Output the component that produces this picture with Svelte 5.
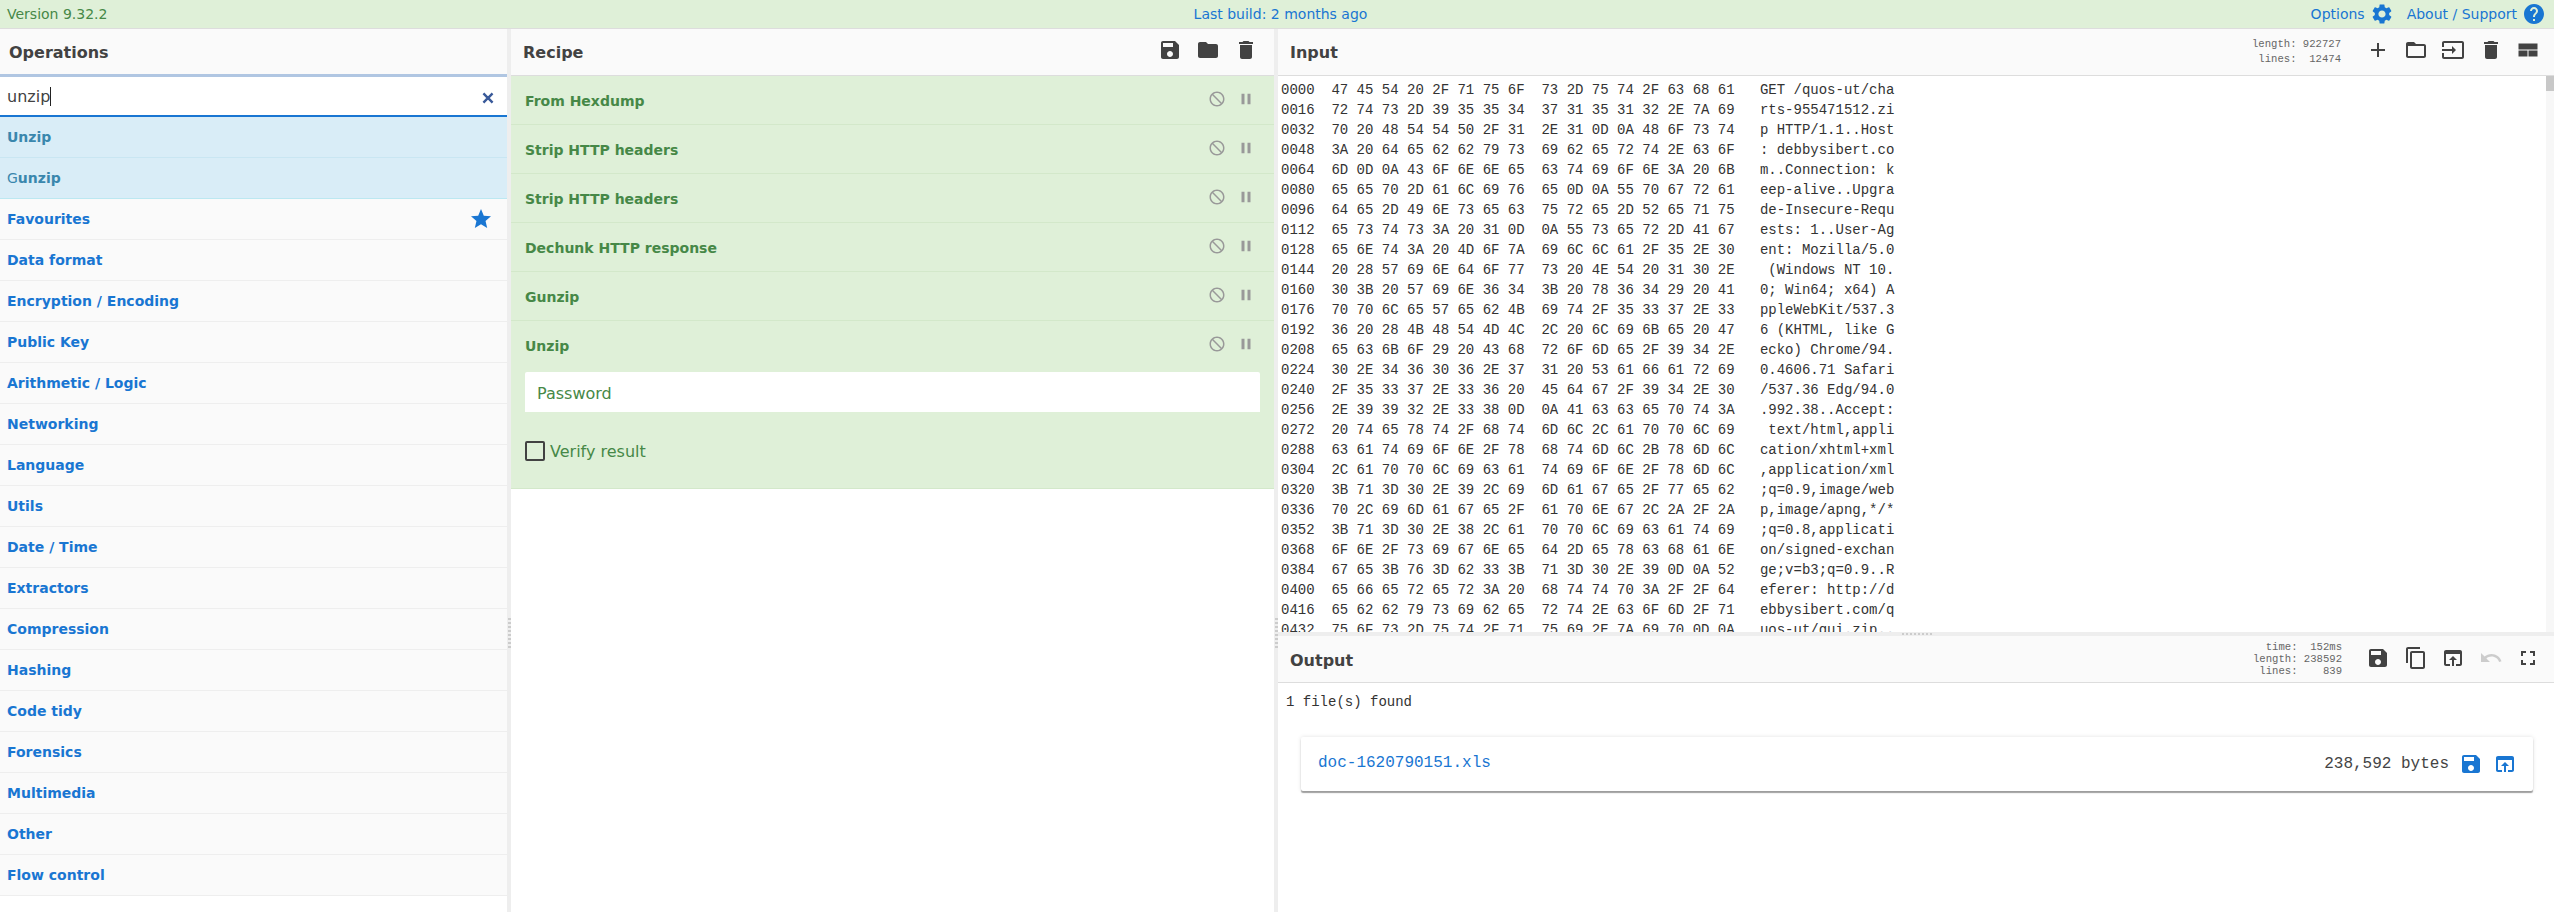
<script>
  const icons = {
    save: 'M17 3H5c-1.11 0-2 .9-2 2v14c0 1.1.89 2 2 2h14c1.1 0 2-.9 2-2V7l-4-4zm-5 16c-1.66 0-3-1.34-3-3s1.34-3 3-3 3 1.34 3 3-1.34 3-3 3zm3-10H5V5h10v4z',
    folder: 'M10 4H4c-1.1 0-1.99.9-1.99 2L2 18c0 1.1.9 2 2 2h16c1.1 0 2-.9 2-2V8c0-1.1-.9-2-2-2h-8l-2-2z',
    folderOpen: 'M20 6h-8l-2-2H4c-1.1 0-1.99.9-1.99 2L2 18c0 1.1.9 2 2 2h16c1.1 0 2-.9 2-2V8c0-1.1-.9-2-2-2zm0 12H4V8h16v10z',
    trash: 'M6 19c0 1.1.9 2 2 2h8c1.1 0 2-.9 2-2V7H6v12zM19 4h-3.5l-1-1h-5l-1 1H5v2h14V4z',
    add: 'M19 13h-6v6h-2v-6H5v-2h6V5h2v6h6v2z',
    input: 'M21 3.01H3c-1.1 0-2 .9-2 2V9h2V4.99h18v14.03H3V15H1v4.01c0 1.1.9 1.98 2 1.98h18c1.1 0 2-.88 2-1.98v-14c0-1.11-.9-2-2-2zM11 16l4-4-4-4v3H1v2h10v3z',
    compact: 'M2.5 5.5h19v6h-19zM2.5 12.5h9v6h-9zM12.5 12.5h9v6h-9z',
    copy: 'M16 1H4c-1.1 0-2 .9-2 2v14h2V3h12V1zm3 4H8c-1.1 0-2 .9-2 2v14c0 1.1.9 2 2 2h11c1.1 0 2-.9 2-2V7c0-1.1-.9-2-2-2zm0 16H8V7h11v14z',
    open: 'M19 4H5c-1.11 0-2 .9-2 2v12c0 1.1.89 2 2 2h4v-2H5V8h14v10h-4v2h4c1.1 0 2-.9 2-2V6c0-1.1-.89-2-2-2zm-7 6l-4 4h3v6h2v-6h3l-4-4z',
    undo: 'M12.5 8c-2.65 0-5.05.99-6.9 2.6L2 7v9h9l-3.62-3.62c1.39-1.16 3.16-1.88 5.12-1.88 3.54 0 6.55 2.31 7.6 5.5l2.37-.78C21.08 11.03 17.15 8 12.5 8z',
    fullscreen: 'M7 14H5v5h5v-2H7v-3zm-2-4h2V7h3V5H5v5zm12 7h-3v2h5v-5h-2v3zM14 5v2h3v3h2V5h-5z',
    gear: 'M19.14 12.94c.04-.3.06-.61.06-.94 0-.32-.02-.64-.07-.94l2.03-1.58c.18-.14.23-.41.12-.61l-1.92-3.32c-.12-.22-.37-.29-.59-.22l-2.39.96c-.5-.38-1.03-.7-1.62-.94l-.36-2.54c-.04-.24-.24-.41-.48-.41h-3.84c-.24 0-.43.17-.47.41l-.36 2.54c-.59.24-1.13.57-1.62.94l-2.39-.96c-.22-.08-.47 0-.59.22L2.74 8.87c-.12.21-.08.47.12.61l2.03 1.58c-.05.3-.09.63-.09.94s.02.64.07.94l-2.03 1.58c-.18.14-.23.41-.12.61l1.92 3.32c.12.22.37.29.59.22l2.39-.96c.5.38 1.03.7 1.62.94l.36 2.54c.05.24.24.41.48.41h3.84c.24 0 .44-.17.47-.41l.36-2.54c.59-.24 1.13-.56 1.62-.94l2.39.96c.22.08.47 0 .59-.22l1.92-3.32c.12-.22.07-.47-.12-.61l-2.01-1.58zM12 15.6c-1.98 0-3.6-1.62-3.6-3.6s1.62-3.6 3.6-3.6 3.6 1.62 3.6 3.6-1.62 3.6-3.6 3.6z',
    help: 'M12 2C6.48 2 2 6.48 2 12s4.48 10 10 10 10-4.48 10-10S17.52 2 12 2zm1 17h-2v-2h2v2zm2.07-7.75l-.9.92C13.45 12.9 13 13.5 13 15h-2v-.5c0-1.1.45-2.1 1.17-2.83l1.24-1.26c.37-.36.59-.86.59-1.41 0-1.1-.9-2-2-2s-2 .9-2 2H8c0-2.21 1.79-4 4-4s4 1.79 4 4c0 .88-.36 1.68-.93 2.25z',
    star: 'M12 17.27L18.18 21l-1.64-7.03L22 9.24l-7.19-.61L12 2 9.19 8.63 2 9.24l5.46 4.73L5.82 21z',
    block: 'M12 2C6.47 2 2 6.47 2 12s4.47 10 10 10 10-4.47 10-10S17.53 2 12 2zm0 18c-4.41 0-8-3.59-8-8 0-1.85.63-3.55 1.69-4.9L16.9 18.31C15.55 19.37 13.85 20 12 20zm6.31-3.1L7.1 5.69C8.45 4.63 10.15 4 12 4c4.41 0 8 3.59 8 8 0 1.85-.63 3.55-1.69 4.9z',
    pause: 'M6 19h4V5H6v14zm8-14v14h4V5h-4z',
    clear: 'M19 6.41L17.59 5 12 10.59 6.41 5 5 6.41 10.59 12 5 17.59 6.41 19 12 13.41 17.59 19 19 17.59 13.41 12z'
  };

  const categories = [
    'Favourites', 'Data format', 'Encryption / Encoding', 'Public Key', 'Arithmetic / Logic',
    'Networking', 'Language', 'Utils', 'Date / Time', 'Extractors', 'Compression', 'Hashing',
    'Code tidy', 'Forensics', 'Multimedia', 'Other', 'Flow control'
  ];

  const steps = ['From Hexdump', 'Strip HTTP headers', 'Strip HTTP headers', 'Dechunk HTTP response', 'Gunzip'];

  const hex = [
    '47 45 54 20 2F 71 75 6F 73 2D 75 74 2F 63 68 61',
    '72 74 73 2D 39 35 35 34 37 31 35 31 32 2E 7A 69',
    '70 20 48 54 54 50 2F 31 2E 31 0D 0A 48 6F 73 74',
    '3A 20 64 65 62 62 79 73 69 62 65 72 74 2E 63 6F',
    '6D 0D 0A 43 6F 6E 6E 65 63 74 69 6F 6E 3A 20 6B',
    '65 65 70 2D 61 6C 69 76 65 0D 0A 55 70 67 72 61',
    '64 65 2D 49 6E 73 65 63 75 72 65 2D 52 65 71 75',
    '65 73 74 73 3A 20 31 0D 0A 55 73 65 72 2D 41 67',
    '65 6E 74 3A 20 4D 6F 7A 69 6C 6C 61 2F 35 2E 30',
    '20 28 57 69 6E 64 6F 77 73 20 4E 54 20 31 30 2E',
    '30 3B 20 57 69 6E 36 34 3B 20 78 36 34 29 20 41',
    '70 70 6C 65 57 65 62 4B 69 74 2F 35 33 37 2E 33',
    '36 20 28 4B 48 54 4D 4C 2C 20 6C 69 6B 65 20 47',
    '65 63 6B 6F 29 20 43 68 72 6F 6D 65 2F 39 34 2E',
    '30 2E 34 36 30 36 2E 37 31 20 53 61 66 61 72 69',
    '2F 35 33 37 2E 33 36 20 45 64 67 2F 39 34 2E 30',
    '2E 39 39 32 2E 33 38 0D 0A 41 63 63 65 70 74 3A',
    '20 74 65 78 74 2F 68 74 6D 6C 2C 61 70 70 6C 69',
    '63 61 74 69 6F 6E 2F 78 68 74 6D 6C 2B 78 6D 6C',
    '2C 61 70 70 6C 69 63 61 74 69 6F 6E 2F 78 6D 6C',
    '3B 71 3D 30 2E 39 2C 69 6D 61 67 65 2F 77 65 62',
    '70 2C 69 6D 61 67 65 2F 61 70 6E 67 2C 2A 2F 2A',
    '3B 71 3D 30 2E 38 2C 61 70 70 6C 69 63 61 74 69',
    '6F 6E 2F 73 69 67 6E 65 64 2D 65 78 63 68 61 6E',
    '67 65 3B 76 3D 62 33 3B 71 3D 30 2E 39 0D 0A 52',
    '65 66 65 72 65 72 3A 20 68 74 74 70 3A 2F 2F 64',
    '65 62 62 79 73 69 62 65 72 74 2E 63 6F 6D 2F 71',
    '75 6F 73 2D 75 74 2F 71 75 69 2E 7A 69 70 0D 0A'
  ];

  function dumpLine(row, i) {
    const bytes = row.split(' ');
    const text = bytes
      .map((b) => {
        const c = parseInt(b, 16);
        return c >= 32 && c < 127 ? String.fromCharCode(c) : '.';
      })
      .join('');
    const offset = String(i * 16).padStart(4, '0');
    return `${offset}  ${bytes.slice(0, 8).join(' ')}  ${bytes.slice(8).join(' ')}   ${text}`;
  }

  const dump = hex.map(dumpLine).join('\n');
</script>

{#snippet icon(name, size = 24)}
  <svg class="icon" width={size} height={size} viewBox="0 0 24 24" fill="currentColor"><path d={icons[name]} /></svg>
{/snippet}

<div class="page">
  <header class="banner">
    <span class="version">Version 9.32.2</span>
    <a class="build">Last build: 2 months ago</a>
    <div class="links">
      <a>Options</a>
      {@render icon('gear')}
      <a class="about">About / Support</a>
      {@render icon('help')}
    </div>
  </header>

  <div class="columns">
    <section class="ops">
      <div class="head ops-head"><h2>Operations</h2></div>
      <div class="search">
        <span class="query">unzip</span><span class="caret"></span>
        <span class="clear">{@render icon('clear', 16)}</span>
      </div>
      <div class="op hit">Unzip</div>
      <div class="op hit last"><span class="plain">G</span>unzip</div>
      {#each categories as cat, i}
        <div class="op">
          {cat}
          {#if i === 0}<span class="star">{@render icon('star')}</span>{/if}
        </div>
      {/each}
    </section>

    <div class="gutter"><span class="dots"></span></div>

    <section class="recipe">
      <div class="head">
        <h2>Recipe</h2>
        <div class="tools recipe-tools">
          {@render icon('save')}
          {@render icon('folder')}
          {@render icon('trash')}
        </div>
      </div>
      {#each steps as step}
        <div class="step">
          <span class="step-name">{step}</span>
          <div class="step-icons">
            {@render icon('block', 18)}
            {@render icon('pause', 18)}
          </div>
        </div>
      {/each}
      <div class="step open">
        <div class="step-top">
          <span class="step-name">Unzip</span>
          <div class="step-icons">
            {@render icon('block', 18)}
            {@render icon('pause', 18)}
          </div>
        </div>
        <div class="password">Password</div>
        <div class="verify"><span class="box"></span>Verify result</div>
      </div>
    </section>

    <div class="gutter"><span class="dots"></span></div>

    <div class="io">
      <section class="input">
        <div class="head">
          <h2>Input</h2>
          <div class="stats input-stats">
            <div>length: 922727</div>
            <div>lines:  12474</div>
          </div>
          <div class="tools io-tools">
            {@render icon('add')}
            {@render icon('folderOpen')}
            {@render icon('input')}
            {@render icon('trash')}
            {@render icon('compact')}
          </div>
        </div>
        <div class="dump-wrap">
          <pre class="dump">{dump}</pre>
          <div class="scrollbar"><span class="thumb"></span></div>
        </div>
      </section>

      <div class="hgutter"><span class="hdots"></span></div>

      <section class="output">
        <div class="head output-head">
          <h2>Output</h2>
          <div class="stats output-stats">
            <div>time:  152ms</div>
            <div>length: 238592</div>
            <div>lines:    839</div>
          </div>
          <div class="tools io-tools">
            {@render icon('save')}
            {@render icon('copy')}
            {@render icon('open')}
            <span class="muted">{@render icon('undo')}</span>
            {@render icon('fullscreen')}
          </div>
        </div>
        <div class="result">
          <div class="found">1 file(s) found</div>
          <div class="card">
            <a class="file">doc-1620790151.xls</a>
            <span class="bytes">238,592 bytes</span>
            <span class="card-icons">
              {@render icon('save')}
              {@render icon('open')}
            </span>
          </div>
        </div>
      </section>
    </div>
  </div>
</div>

<style>
  :global(body) {
    margin: 0;
    background: #fff;
  }

  .page {
    width: 2554px;
    height: 912px;
    overflow: hidden;
    font-family: 'DejaVu Sans', sans-serif;
    color: #424242;
    display: flex;
    flex-direction: column;
  }

  .icon {
    display: block;
    flex: none;
  }

  .banner {
    height: 28px;
    flex: none;
    border-bottom: 1px solid #ddd;
    background: #dff0d8;
    display: grid;
    grid-template-columns: 1fr auto 1fr;
    align-items: center;
    padding: 0 8px 0 7px;
    font-size: 14px;
    color: #468847;
  }

  .banner a {
    color: #1976d2;
  }

  .build {
    transform: translateX(4px);
  }

  .links {
    display: flex;
    justify-content: flex-end;
    align-items: center;
    color: #1976d2;
    gap: 5px;
  }

  .about {
    margin-left: 8px;
  }

  .columns {
    flex: 1;
    min-height: 0;
    display: grid;
    grid-template-columns: 507px 4px 763px 4px 1276px;
  }

  .gutter {
    background: #eee;
    display: flex;
    justify-content: center;
    padding-top: 589px;
  }

  .dots {
    width: 3px;
    height: 31px;
    background: repeating-linear-gradient(#ccc 0 2px, transparent 2px 4px);
  }

  .head {
    height: 47px;
    flex: none;
    box-sizing: border-box;
    background: #fafafa;
    border-bottom: 1px solid #ddd;
    display: flex;
    align-items: center;
    padding-left: 12px;
    padding-top: 1px;
  }

  .output-head {
    padding-top: 2px;
  }

  h2 {
    margin: 0;
    font-size: 16px;
    font-weight: 700;
    color: #424242;
  }

  .ops-head {
    height: 45px;
    border-bottom: 0;
    padding-left: 9px;
  }

  .search {
    height: 43px;
    box-sizing: border-box;
    background: #fff;
    border-top: 3px solid #b0c6e2;
    border-bottom: 2px solid #1976d2;
    display: flex;
    align-items: center;
    padding-left: 7px;
    position: relative;
    font-size: 16px;
    color: #424242;
  }

  .caret {
    width: 1px;
    height: 19px;
    background: #222;
  }

  .clear {
    position: absolute;
    right: 11px;
    top: 13px;
    color: #3a5a9a;
  }

  .clear svg {
    stroke: currentColor;
    stroke-width: 1.6;
  }

  .op {
    height: 41px;
    box-sizing: border-box;
    background: #fafafa;
    border-bottom: 1px solid #eee;
    display: flex;
    align-items: center;
    justify-content: space-between;
    padding: 0 14px 0 7px;
    font-size: 14px;
    font-weight: 700;
    color: #1976d2;
  }

  .op.hit {
    display: block;
    line-height: 40px;
    background: #d9edf7;
    color: #3a87ad;
    border-bottom-color: #c9e6f2;
  }

  .op.hit.last {
    border-bottom-color: #bce8f1;
  }

  .plain {
    font-weight: 400;
  }

  .star {
    color: #1976d2;
  }

  .recipe {
    display: flex;
    flex-direction: column;
  }

  .tools {
    display: flex;
    align-items: center;
    color: #424242;
    margin-left: auto;
    padding-bottom: 5px;
  }

  .recipe-tools {
    gap: 14px;
    margin-right: 16px;
  }

  .step {
    height: 49px;
    box-sizing: border-box;
    background: #dff0d8;
    border-bottom: 1px solid #d3e8ca;
    display: flex;
    align-items: center;
    justify-content: space-between;
    padding: 2px 19px 0 14px;
    color: #468847;
  }

  .step-name {
    font-size: 14px;
    font-weight: 700;
  }

  .step-icons {
    display: flex;
    gap: 11px;
    color: #999;
    padding-bottom: 4px;
  }

  .step.open {
    height: 168px;
    display: block;
    padding: 0;
  }

  .step-top {
    height: 48px;
    box-sizing: border-box;
    display: flex;
    align-items: center;
    justify-content: space-between;
    padding: 1px 19px 0 14px;
  }

  .password {
    margin: 3px 14px 0;
    height: 40px;
    line-height: 44px;
    background: #fff;
    padding-left: 12px;
    font-size: 16px;
    border-radius: 2px 2px 0 0;
  }

  .verify {
    margin: 29px 14px 0;
    display: flex;
    align-items: center;
    font-size: 16px;
    gap: 5px;
  }

  .box {
    width: 20px;
    height: 20px;
    box-sizing: border-box;
    border: 2px solid #424242;
    border-radius: 2px;
  }

  .io {
    display: flex;
    flex-direction: column;
    min-width: 0;
  }

  .input {
    height: 603px;
    flex: none;
    display: flex;
    flex-direction: column;
  }

  .stats {
    font-family: 'Liberation Mono', monospace;
    font-size: 10.6px;
    color: #666;
    text-align: right;
  }

  .stats div {
    white-space: pre;
  }

  .input-stats {
    margin-left: auto;
    line-height: 15.5px;
    padding-bottom: 1px;
  }

  .output-stats {
    margin-left: auto;
    line-height: 12px;
    padding-bottom: 2px;
  }

  .io-tools {
    margin-left: 25px;
    margin-right: 14px;
    gap: 13.5px;
  }

  .output-stats + .io-tools {
    margin-left: 24px;
    padding-bottom: 5px;
  }

  .dump-wrap {
    flex: 1;
    min-height: 0;
    overflow: hidden;
    position: relative;
  }

  .dump {
    margin: 0;
    padding: 4px 0 0 3px;
    font: 14px/20px 'Liberation Mono', monospace;
    color: #333;
  }

  .scrollbar {
    position: absolute;
    top: 0;
    right: 0;
    bottom: 0;
    width: 8px;
    background: #f7f7f7;
  }

  .thumb {
    display: block;
    height: 15px;
    background: #c8c8c8;
  }

  .hgutter {
    height: 4px;
    flex: none;
    background: #eee;
    display: flex;
    justify-content: flex-end;
    align-items: center;
    padding-right: 621px;
  }

  .hdots {
    width: 31px;
    height: 2px;
    background: repeating-linear-gradient(90deg, #ccc 0 2px, transparent 2px 4px);
  }

  .result {
    padding: 9px 21px 0 8px;
    font-family: 'Liberation Mono', monospace;
  }

  .found {
    font-size: 14px;
    line-height: 20px;
    color: #333;
  }

  .card {
    margin: 25px 0 0 15px;
    height: 54px;
    background: #fff;
    border-radius: 2px;
    box-shadow: 0 2px 1px rgba(0, 0, 0, 0.35), 0 0 4px rgba(0, 0, 0, 0.12);
    display: flex;
    align-items: center;
    padding: 0 16px 0 17px;
    font-size: 16px;
  }

  .file {
    color: #1976d2;
    padding-bottom: 2px;
  }

  .bytes {
    margin-left: auto;
    color: #444;
  }

  .card-icons {
    display: flex;
    gap: 10px;
    color: #1976d2;
    margin-left: 10px;
  }

  .muted {
    color: #ccc;
  }
</style>
